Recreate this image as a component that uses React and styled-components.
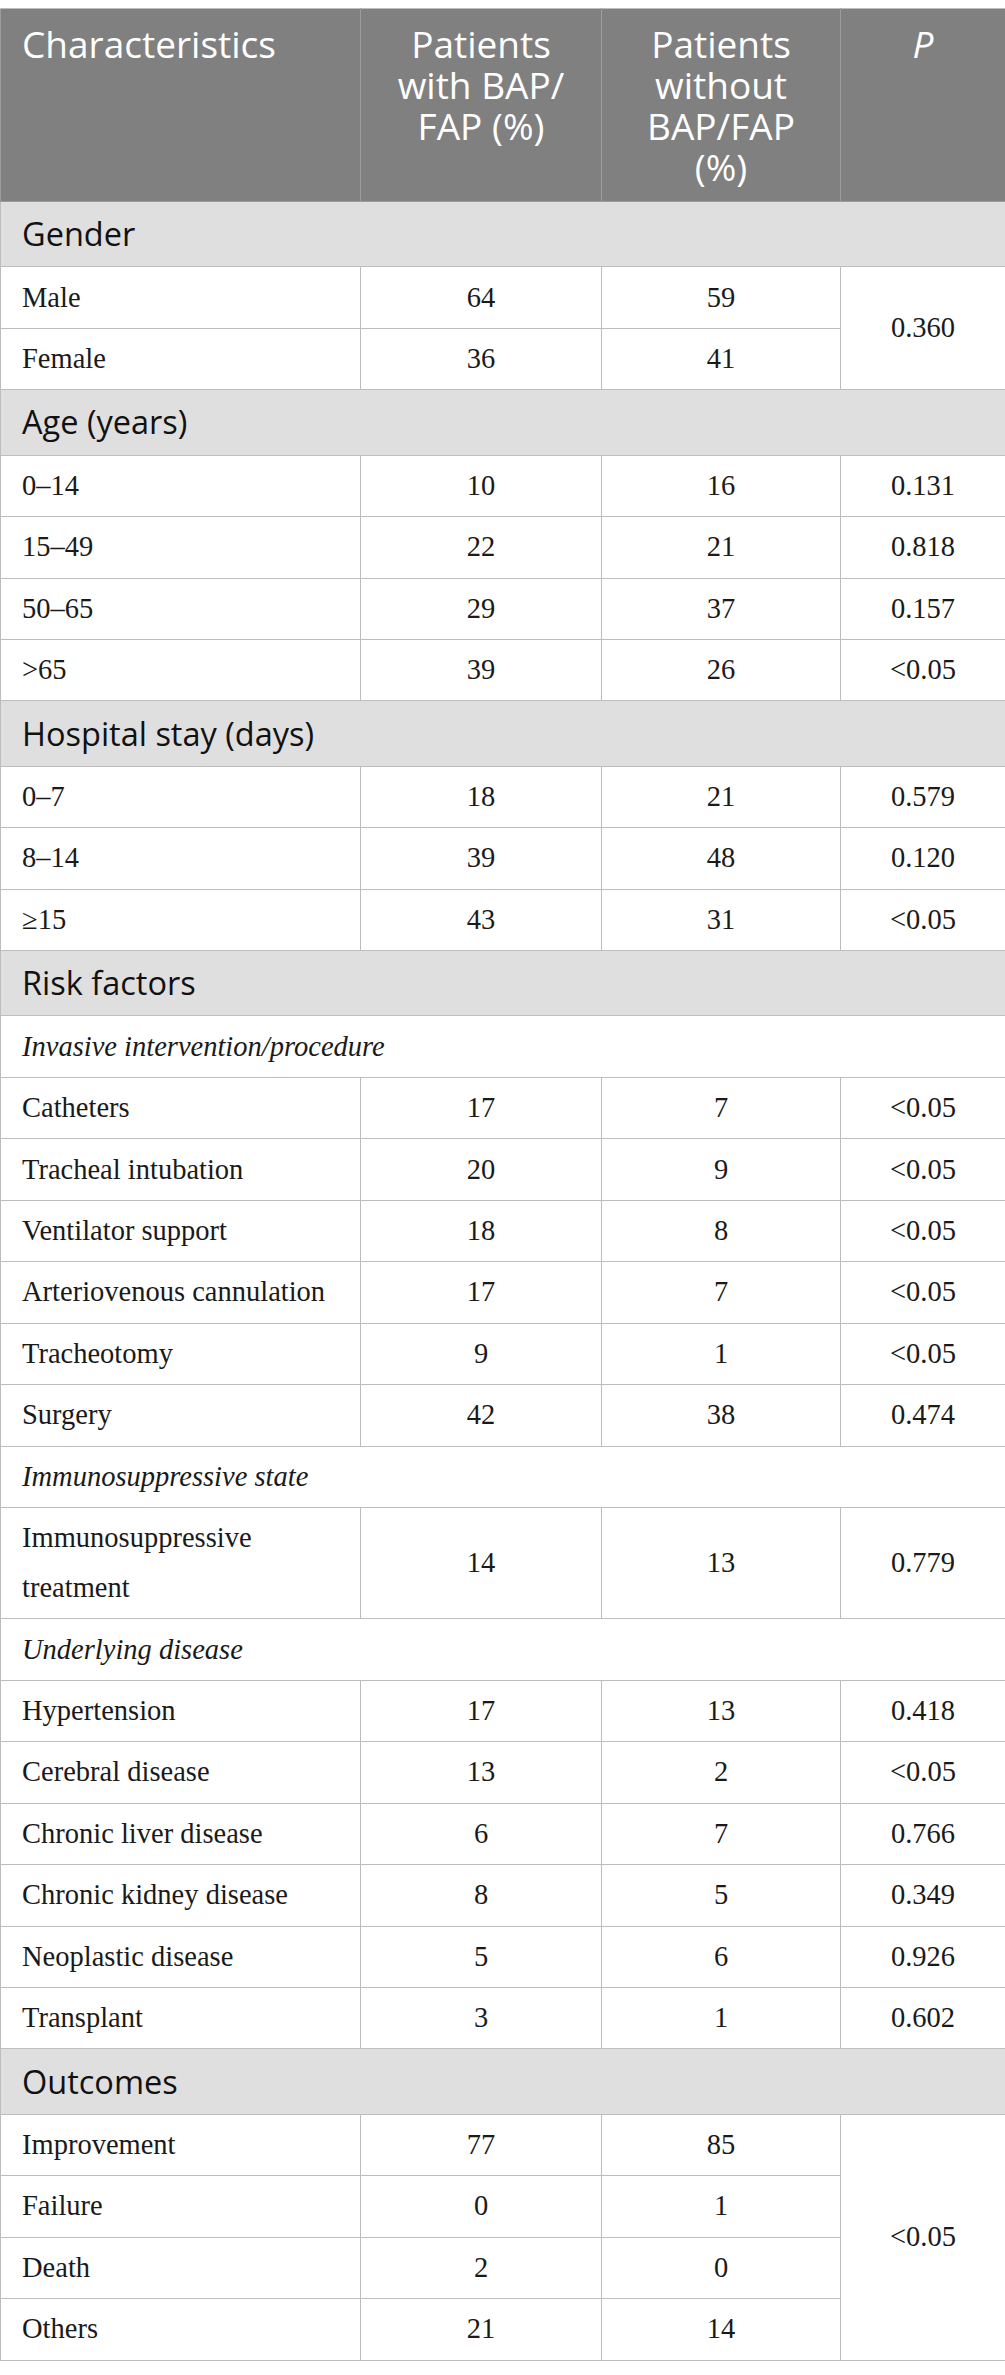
import React from 'react';
import styled, { createGlobalStyle } from 'styled-components';

const GlobalStyle = createGlobalStyle`
  html, body {
    margin: 0;
    padding: 0;
    background: #ffffff;
  }
`;

const rows = [
  { section: 'Gender' },
  { label: 'Male', a: '64', b: '59', p: '0.360', span: 2 },
  { label: 'Female', a: '36', b: '41', skipP: true },
  { section: 'Age (years)' },
  { label: '0–14', a: '10', b: '16', p: '0.131' },
  { label: '15–49', a: '22', b: '21', p: '0.818' },
  { label: '50–65', a: '29', b: '37', p: '0.157' },
  { label: '>65', a: '39', b: '26', p: '<0.05' },
  { section: 'Hospital stay (days)' },
  { label: '0–7', a: '18', b: '21', p: '0.579' },
  { label: '8–14', a: '39', b: '48', p: '0.120' },
  { label: '≥15', a: '43', b: '31', p: '<0.05' },
  { section: 'Risk factors' },
  { sub: 'Invasive intervention/procedure' },
  { label: 'Catheters', a: '17', b: '7', p: '<0.05' },
  { label: 'Tracheal intubation', a: '20', b: '9', p: '<0.05' },
  { label: 'Ventilator support', a: '18', b: '8', p: '<0.05' },
  { label: 'Arteriovenous cannulation', a: '17', b: '7', p: '<0.05' },
  { label: 'Tracheotomy', a: '9', b: '1', p: '<0.05' },
  { label: 'Surgery', a: '42', b: '38', p: '0.474' },
  { sub: 'Immunosuppressive state' },
  { label: ['Immunosuppressive', 'treatment'], a: '14', b: '13', p: '0.779' },
  { sub: 'Underlying disease' },
  { label: 'Hypertension', a: '17', b: '13', p: '0.418' },
  { label: 'Cerebral disease', a: '13', b: '2', p: '<0.05' },
  { label: 'Chronic liver disease', a: '6', b: '7', p: '0.766' },
  { label: 'Chronic kidney disease', a: '8', b: '5', p: '0.349' },
  { label: 'Neoplastic disease', a: '5', b: '6', p: '0.926' },
  { label: 'Transplant', a: '3', b: '1', p: '0.602' },
  { section: 'Outcomes' },
  { label: 'Improvement', a: '77', b: '85', p: '<0.05', span: 4 },
  { label: 'Failure', a: '0', b: '1', skipP: true },
  { label: 'Death', a: '2', b: '0', skipP: true },
  { label: 'Others', a: '21', b: '14', skipP: true },
];

const Page = styled.div`
  padding-top: 8px;
`;

const Table = styled.table`
  width: 1005px;
  border-collapse: collapse;
  table-layout: fixed;
  border: 1px solid #bdbdbd;
`;

const HeadCell = styled.th`
  background: #7f807f;
  color: #ffffff;
  font-family: "Open Sans", "Noto Sans", sans-serif;
  font-size: 37px;
  font-weight: 400;
  line-height: 41px;
  padding: 14px 10px 14px ${(p) => (p.$left ? '21px' : '10px')};
  text-align: ${(p) => (p.$left ? 'left' : 'center')};
  font-style: ${(p) => (p.$italic ? 'italic' : 'normal')};
  vertical-align: top;
  border: 1px solid #9c9c9c;
  border-top-color: #bdbdbd;
`;

const HeadLine = styled.span`
  display: block;
`;

const SectionCell = styled.td`
  background: #e0dfe0;
  color: #111111;
  font-family: "Open Sans", "Noto Sans", sans-serif;
  font-size: 32.5px;
  line-height: 48px;
  padding: 8.2px 21px;
  border: 1px solid #bdbdbd;
`;

const SubCell = styled.td`
  color: #1a1a1a;
  font-family: "Liberation Serif", "Times New Roman", serif;
  font-style: italic;
  font-size: 28.5px;
  line-height: 50px;
  padding: 5.22px 21px;
  border: 1px solid #bdbdbd;
`;

const Cell = styled.td`
  color: #1a1a1a;
  font-family: "Liberation Serif", "Times New Roman", serif;
  font-size: 28.5px;
  line-height: 50px;
  padding: 5.22px ${(p) => (p.$left ? '21px' : '8px')};
  text-align: ${(p) => (p.$left ? 'left' : 'center')};
  vertical-align: middle;
  border: 1px solid #bdbdbd;
`;

const Line = styled.span`
  display: block;
`;

const headers = [
  { lines: ['Characteristics'], left: true },
  { lines: ['Patients', 'with BAP/', 'FAP (%)'] },
  { lines: ['Patients', 'without', 'BAP/FAP', '(%)'] },
  { lines: ['P'], italic: true },
];

export default function App() {
  return (
    <Page>
      <GlobalStyle />
      <Table>
        <colgroup>
          <col style={{ width: 360 }} />
          <col style={{ width: 241 }} />
          <col style={{ width: 239 }} />
          <col style={{ width: 165 }} />
        </colgroup>
        <thead>
          <tr>
            {headers.map((h, i) => (
              <HeadCell key={i} $left={h.left} $italic={h.italic}>
                {h.lines.map((l) => (
                  <HeadLine key={l}>{l}</HeadLine>
                ))}
              </HeadCell>
            ))}
          </tr>
        </thead>
        <tbody>
          {rows.map((r, i) => {
            if (r.section) {
              return (
                <tr key={i}>
                  <SectionCell colSpan={4}>{r.section}</SectionCell>
                </tr>
              );
            }
            if (r.sub) {
              return (
                <tr key={i}>
                  <SubCell colSpan={4}>{r.sub}</SubCell>
                </tr>
              );
            }
            return (
              <tr key={i}>
                <Cell $left>
                  {Array.isArray(r.label)
                    ? r.label.map((l) => <Line key={l}>{l}</Line>)
                    : r.label}
                </Cell>
                <Cell>{r.a}</Cell>
                <Cell>{r.b}</Cell>
                {!r.skipP && <Cell rowSpan={r.span || 1}>{r.p}</Cell>}
              </tr>
            );
          })}
        </tbody>
      </Table>
    </Page>
  );
}
